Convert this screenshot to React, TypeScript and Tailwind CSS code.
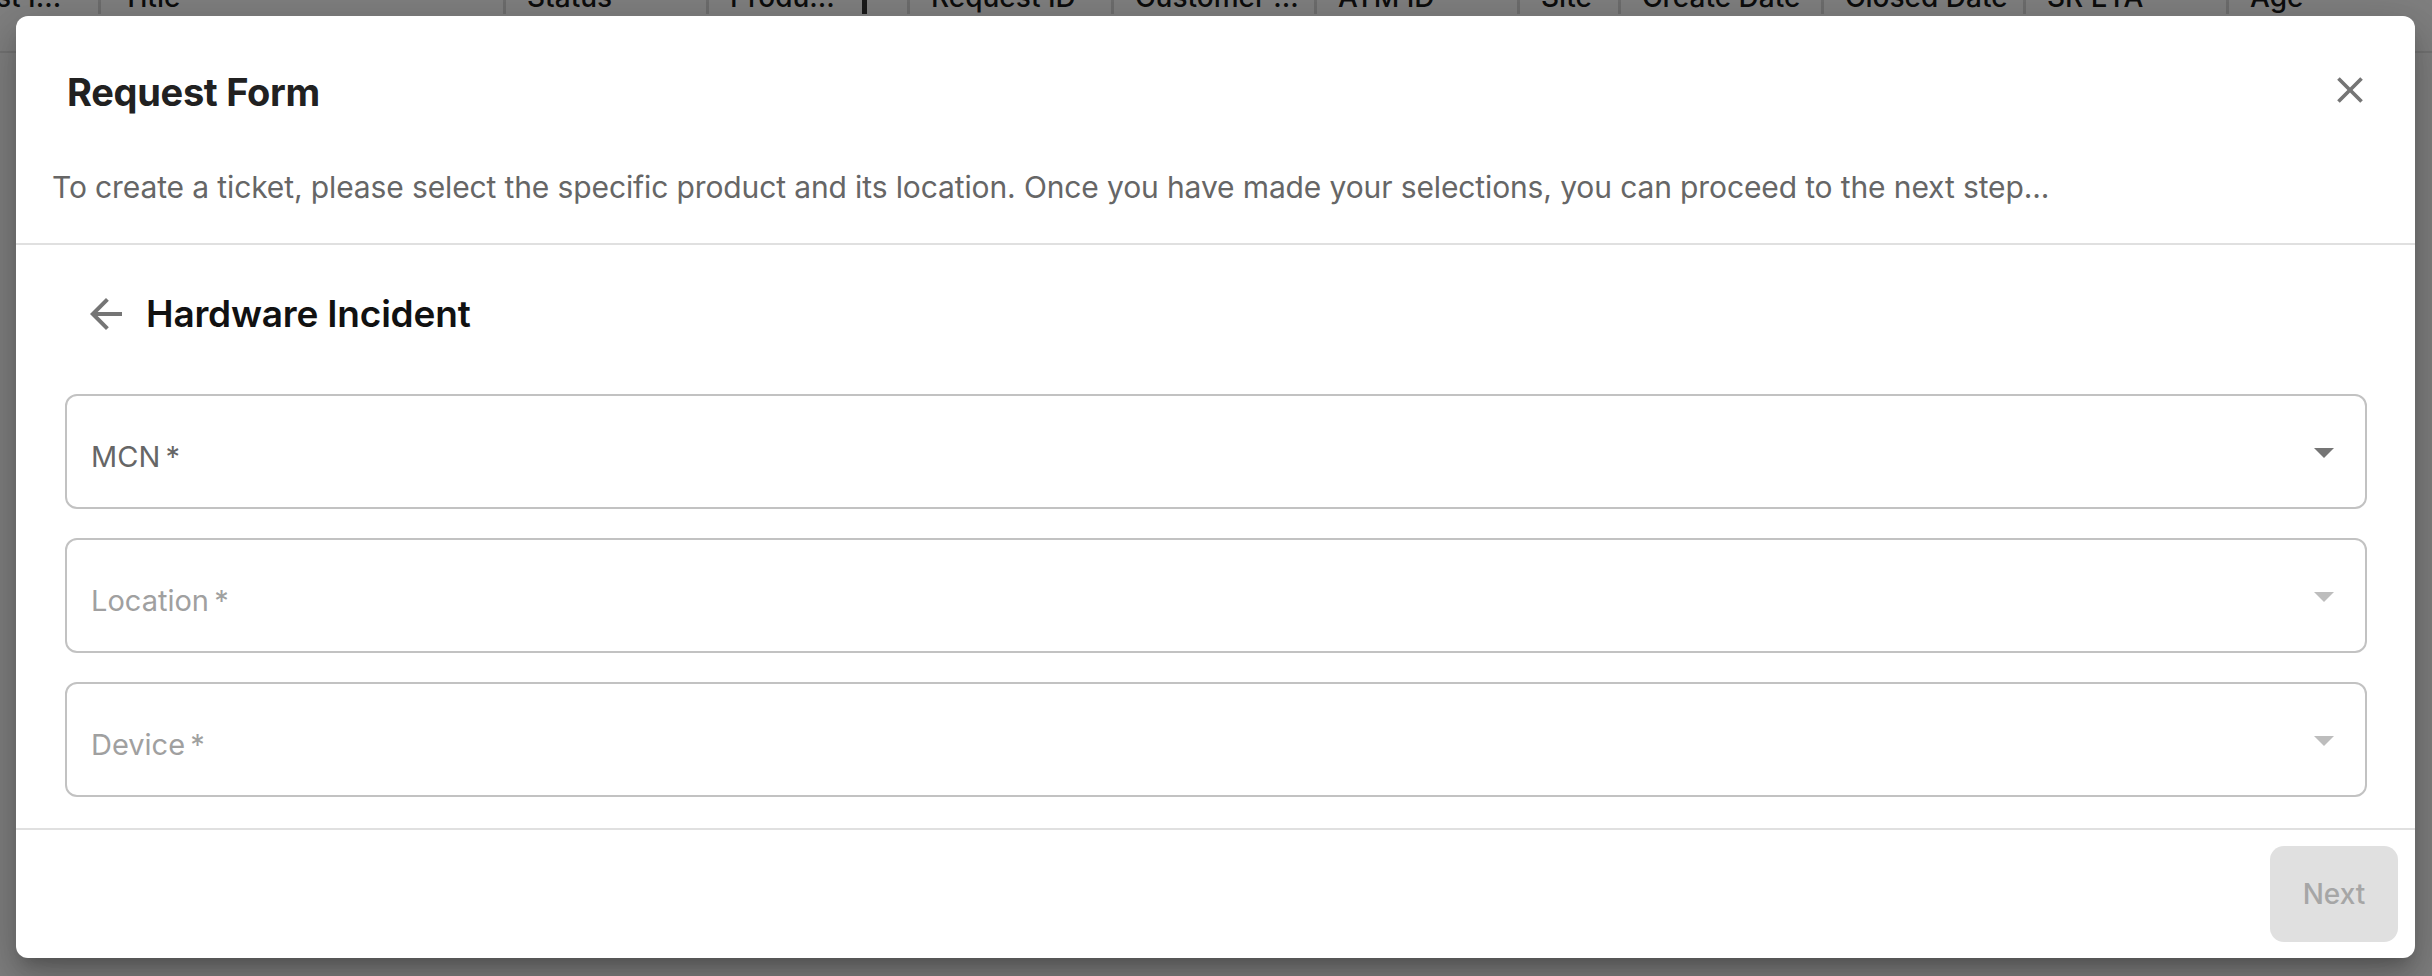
import React from "react"

const columns = [
  { label: "st I...", w: "w-[101px]" },
  { label: "Title", w: "w-[405px]" },
  { label: "Status", w: "w-[203px]" },
  { label: "Produ...", w: "w-[201px]", handle: true },
  { label: "Request ID", w: "w-[204px]" },
  { label: "Customer ...", w: "w-[203px]" },
  { label: "ATM ID", w: "w-[203px]" },
  { label: "Site", w: "w-[101px]" },
  { label: "Create Date", w: "w-[203px]" },
  { label: "Closed Date", w: "w-[202px]" },
  { label: "SR ETA", w: "w-[203px]" },
  { label: "Age", w: "w-[203px]" },
]

const fields = [
  { label: "MCN", disabled: false },
  { label: "Location", disabled: true },
  { label: "Device", disabled: true },
]

function SelectField({ label, disabled }: { label: string; disabled: boolean }) {
  return (
    <div className="h-[115px] rounded-[12px] border-2 border-[#c2c2c2] flex items-center justify-between pl-[24px] pr-[17px]">
      <span
        className={
          "pt-[10px] text-[29px] leading-[36px] " +
          (disabled ? "text-[#a0a0a0]" : "text-[#666666]")
        }
      >
        {label}
        {"\u2009*"}
      </span>
      <svg viewBox="0 0 24 24" className="w-[48px] h-[48px]">
        <path d="M7 10l5 5 5-5z" fill={disabled ? "#bdbdbd" : "#757575"} />
      </svg>
    </div>
  )
}

export default function App() {
  return (
    <div
      className="relative w-[2432px] h-[976px] overflow-hidden bg-white"
      style={{ fontFamily: "Inter, 'Noto Sans', sans-serif" }}
    >
      {/* Table header behind the dialog (scrolled) */}
      <div className="h-[53px] border-b-2 border-[#e6e6e6] overflow-hidden">
        <div className="flex -mt-[20px] h-[34px] items-center text-[28px] text-[#1a1a1a] font-medium">
          {columns.map((c, i) => (
            <div key={i} className={"flex shrink-0 items-center h-full " + c.w}>
              <span className={"whitespace-nowrap " + (i === 0 ? "-ml-[4px]" : "pl-[21px]")}>{c.label}</span>
              <div className="ml-auto flex items-center gap-[40px] h-full">
                {c.handle && <div className="w-[5px] h-full bg-[#333]" />}
                {i < columns.length - 1 && <div className="w-[3px] h-full bg-[#dadada]" />}
              </div>
            </div>
          ))}
        </div>
      </div>

      {/* Backdrop */}
      <div className="absolute inset-0 bg-black/50" />

      {/* Dialog */}
      <div className="absolute left-[16px] top-[16px] w-[2399px] bg-white rounded-[12px] shadow-[0_11px_15px_-7px_rgba(0,0,0,0.2),0_24px_38px_3px_rgba(0,0,0,0.14),0_9px_46px_8px_rgba(0,0,0,0.12)] flex flex-col">
        {/* Header */}
        <div className="border-b-2 border-[#e0e0e0] pb-[36px]">
          <div className="pt-[52px] pl-[51px] pr-[43px] flex items-center justify-between h-[100px]">
            <h2 className="text-[38px] leading-[48px] font-bold text-[#212121] tracking-[-0.3px]">Request Form</h2>
            <svg viewBox="0 0 24 24" className="w-[44px] h-[44px] -mt-[4px]">
              <path
                d="M19 6.41 17.59 5 12 10.59 6.41 5 5 6.41 10.59 12 5 17.59 6.41 19 12 13.41 17.59 19 19 17.59 13.41 12z"
                fill="#757575"
              />
            </svg>
          </div>
          <p className="mt-[51px] pl-[36px] text-[30px] leading-[40px] text-[#666666] tracking-[-0.12px]">
            To create a ticket, please select the specific product and its location. Once you have made your selections, you can proceed to the next step...
          </p>
        </div>

        {/* Body */}
        <div className="pt-[47px] pb-[31px] pl-[49px] pr-[48px] flex flex-col">
          <div className="h-[44px] flex items-center pl-[17px]">
            <svg viewBox="0 0 24 24" className="w-[48px] h-[48px] shrink-0">
              <path d="M20 11H7.83l5.59-5.59L12 4l-8 8 8 8 1.41-1.41L7.83 13H20v-2z" fill="#757575" />
            </svg>
            <span className="ml-[16px] text-[37px] leading-[44px] font-semibold text-[#111111] tracking-[-0.2px]">Hardware Incident</span>
          </div>
          <div className="mt-[58px] flex flex-col gap-[29px]">
            {fields.map((f) => (
              <SelectField key={f.label} label={f.label} disabled={f.disabled} />
            ))}
          </div>
        </div>

        {/* Footer */}
        <div className="border-t-2 border-[#e0e0e0] flex justify-end py-[16px] pr-[17px]">
          <button className="w-[128px] h-[96px] rounded-[14px] bg-[#e0e0e0] text-[#a6a6a6] text-[28px] font-medium">
            Next
          </button>
        </div>
      </div>
    </div>
  )
}
